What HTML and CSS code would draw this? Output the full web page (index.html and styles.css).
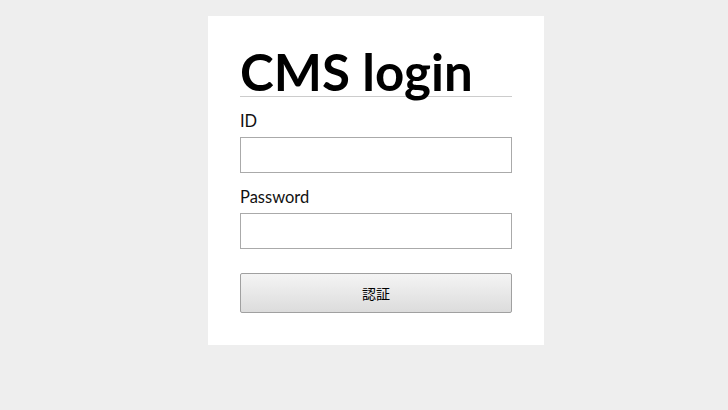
FILE: index.html
```html
<!DOCTYPE html>
<html lang="ja">
<head>
<meta charset="utf-8">
<title>CMS login</title>
<link rel="stylesheet" href="styles.css">
</head>
<body>
<main class="card">
  <h1 class="title">CMS login</h1>
  <form class="form">
    <label class="label" for="id">ID</label>
    <input class="field" id="id" type="text">
    <label class="label" for="pw">Password</label>
    <input class="field" id="pw" type="password">
    <button class="btn" type="button">認証</button>
  </form>
</main>
</body>
</html>
```
FILE: styles.css
```css
html, body {
  margin: 0;
  padding: 0;
  background: #eeeeee;
}
body {
  padding-left: 24px;
  font-family: "Lato", "Noto Sans", "Noto Sans CJK JP", sans-serif;
  color: #000;
}
.card {
  box-sizing: border-box;
  width: 336px;
  margin: 16px auto 0;
  background: #fff;
  padding: 32px 32px 32px;
}
.title {
  margin: 0;
  font-size: 51px;
  font-weight: 700;
  line-height: 48px;
  border-bottom: 1px solid #cccccc;
  letter-spacing: 0;
}
.form {
  display: flex;
  flex-direction: column;
}
.label {
  font-size: 16.5px;
  font-weight: 400;
  color: #111;
  line-height: 20px;
  margin-top: 14px;
  margin-bottom: 6px;
}
.field {
  box-sizing: border-box;
  height: 36px;
  width: 100%;
  margin: 0;
  border: 1px solid #aaaaaa;
  background: #fff;
  padding: 4px 8px;
}
.btn {
  box-sizing: border-box;
  height: 40px;
  margin-top: 24px;
  border: 1px solid #a0a0a0;
  border-radius: 2px;
  background: linear-gradient(#f4f4f4, #dcdcdc);
  font-family: "Noto Sans CJK JP", sans-serif;
  font-size: 14px;
  color: #000;
}
```
